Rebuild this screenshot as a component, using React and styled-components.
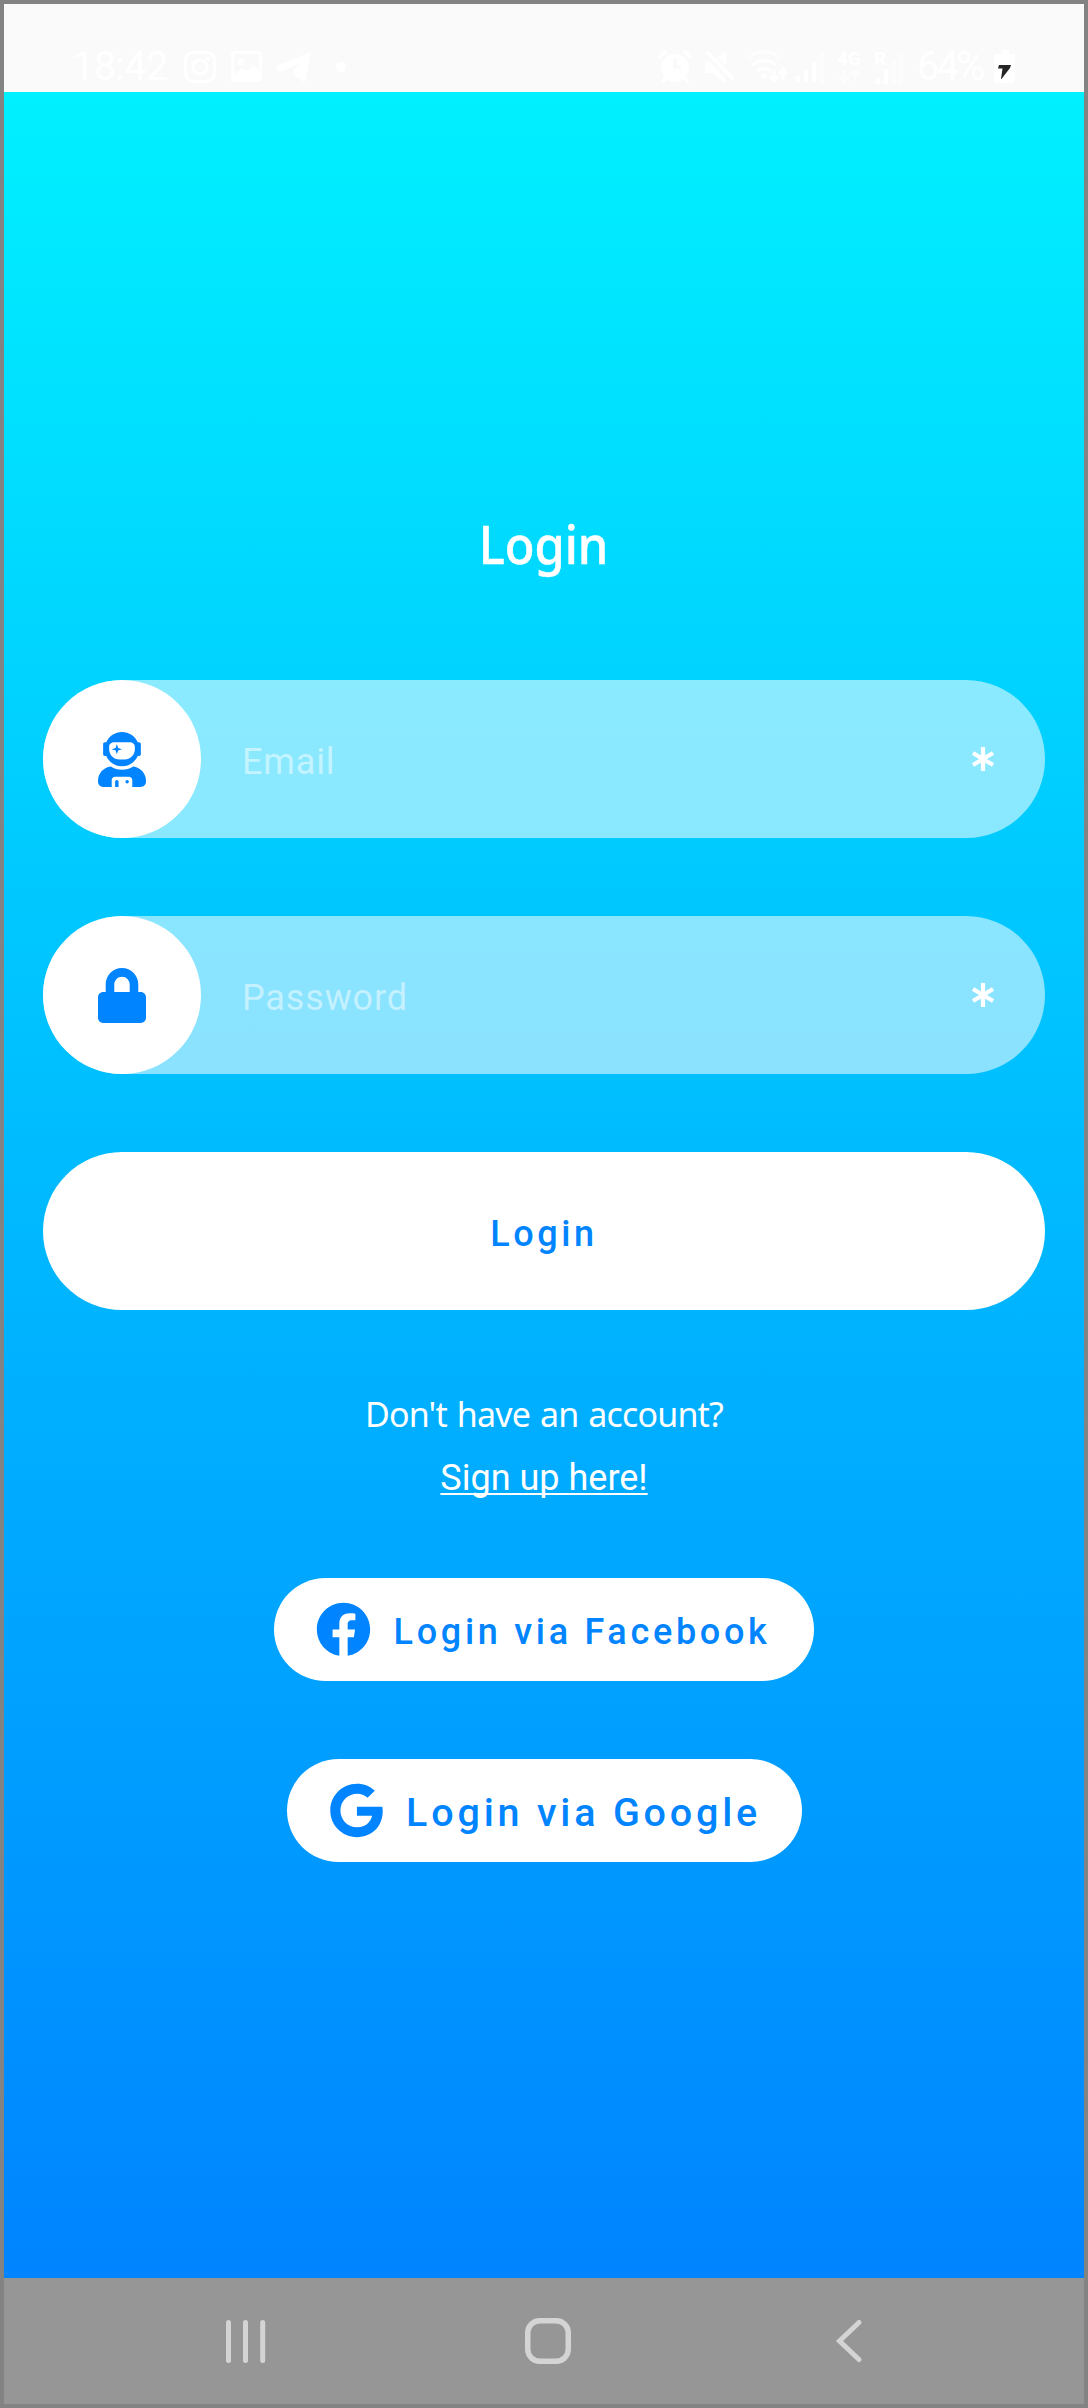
import React from 'react';
import styled, { createGlobalStyle } from 'styled-components';
import { FaFacebook, FaGoogle, FaLock, FaUserAstronaut } from 'react-icons/fa';

const blue = '#0084ff';

const GlobalStyle = createGlobalStyle`
  *, *::before, *::after { box-sizing: border-box; }
  body { margin: 0; font-family: Roboto, "Liberation Sans", sans-serif; }
`;

const Phone = styled.div`
  width: 1088px;
  height: 2408px;
  border: 4px solid #838383;
  display: flex;
  flex-direction: column;
  overflow: hidden;
`;

const StatusBar = styled.header`
  height: 88px;
  padding: 37px 68px 0 68px;
  background: #fafafa;
  color: #fff;
  display: flex;
  align-items: center;
  justify-content: space-between;
`;

const StatusGroup = styled.div`
  display: flex;
  align-items: center;
`;

const StatusText = styled.span`
  font-size: 40px;
  line-height: 40px;
  letter-spacing: ${(p) => p.$spacing || 0}px;
  width: ${(p) => p.$width}px;
  white-space: nowrap;
`;

const StatusIcon = styled.svg`
  display: block;
  flex: none;
  margin-left: ${(p) => p.$gap || 0}px;
  fill: #fff;
`;

const NetworkCell = styled.div`
  width: ${(p) => p.$width}px;
  height: 34px;
  margin-left: ${(p) => p.$gap}px;
  font-size: 19px;
  line-height: 18px;
  font-weight: 700;
`;

const RoamingSignal = styled(StatusIcon)`
  margin-top: -17px;
`;

const Screen = styled.main`
  height: 2186px;
  padding: 412px 39px 0;
  background: linear-gradient(180deg, #00f0ff 0%, ${blue} 100%);
  display: flex;
  flex-direction: column;
  align-items: center;
`;

const Title = styled.h1`
  margin: 0 0 96px;
  height: 80px;
  font-family: "Noto Sans", "Open Sans", sans-serif;
  font-size: 53px;
  line-height: 80px;
  font-weight: 500;
  transform: scaleX(0.92);
  -webkit-text-stroke: 0.5px #fff;
  color: #fff;
`;

const Field = styled.div`
  width: 1002px;
  height: 158px;
  margin-bottom: 78px;
  border-radius: 79px;
  background: rgba(255, 255, 255, 0.54);
  display: flex;
  align-items: center;
`;

const FieldBadge = styled.div`
  width: 158px;
  height: 158px;
  border-radius: 50%;
  background: #fff;
  color: ${blue};
  display: flex;
  align-items: center;
  justify-content: center;
  svg { width: 48px; height: 55px; }
`;

const Placeholder = styled.span`
  flex: 1;
  padding: 6px 0 0 41px;
  font-size: 36px;
  line-height: 44px;
  letter-spacing: 0.85px;
  color: rgba(255, 255, 255, 0.5);
`;

const Required = styled.svg`
  display: block;
  width: 24px;
  height: 24px;
  margin-right: 50px;
  stroke: #fff;
  stroke-width: 4.2;
`;

const Submit = styled.button`
  width: 1002px;
  height: 158px;
  border: 0;
  border-radius: 79px;
  padding: 6px 0 0 0;
  background: #fff;
  color: ${blue};
  font: 500 36px/44px Roboto, sans-serif;
  letter-spacing: 3.6px;
`;

const Prompt = styled.p`
  margin: 77px 0 0;
  height: 54px;
  font-family: "Noto Sans", "Open Sans", sans-serif;
  font-size: 34px;
  line-height: 54px;
  letter-spacing: -0.85px;
  word-spacing: 2px;
  white-space: nowrap;
  color: #fff;
`;

const SignUp = styled.a`
  margin: 14px 0 77px;
  height: 46px;
  font-size: 36px;
  line-height: 46px;
  color: #fff;
  text-decoration: underline;
  text-decoration-thickness: 2px;
  text-underline-offset: 3px;
  text-decoration-skip-ink: none;
`;

const Social = styled.button`
  width: ${(p) => p.$width}px;
  height: 103px;
  margin-bottom: 78px;
  border: 0;
  border-radius: 52px;
  padding: 0 0 0 42px;
  background: #fff;
  color: ${blue};
  display: flex;
  align-items: center;
  gap: 22.6px;
  font: 500 ${(p) => p.$size}px/48px Roboto, sans-serif;
  letter-spacing: ${(p) => p.$spacing}px;
  white-space: nowrap;
  svg { width: auto; height: 55px; flex: none; }
  span { padding-top: 5px; }
`;

const NavBar = styled.nav`
  height: 126px;
  padding: 0 219px;
  background: #969696;
  display: flex;
  align-items: center;
`;

const NavIcon = styled.svg`
  display: block;
  margin-right: ${(p) => p.$after || 0}px;
  fill: none;
  stroke: #d4d4d4;
  stroke-linecap: round;
`;

function Asterisk() {
  return (
    <Required viewBox="-12 -12 24 24">
      <path d="M0-12V12M-10-6L10 6M-10 6L10-6" />
    </Required>
  );
}

export default function App() {
  return (
    <>
      <GlobalStyle />
      <Phone>
        <StatusBar>
          <StatusGroup>
            <StatusText $width={112} $spacing={-0.8}>18:42</StatusText>
            <StatusIcon width="32" height="32" viewBox="0 0 32 32">
              <rect x="1.5" y="1.5" width="29" height="29" rx="8" fill="none" stroke="#fff" strokeWidth="3" />
              <circle cx="16" cy="16" r="7" fill="none" stroke="#fff" strokeWidth="3" />
              <circle cx="24" cy="8" r="2" />
            </StatusIcon>
            <StatusIcon $gap={15} width="32" height="32" viewBox="0 0 32 32">
              <path fillRule="evenodd" d="M2 0h27a2 2 0 0 1 2 2v27a2 2 0 0 1-2 2H2a2 2 0 0 1-2-2V2a2 2 0 0 1 2-2zm1 3v21l8-7 5 3 7-6 5 5V3z" />
              <circle cx="10" cy="11" r="3.5" />
            </StatusIcon>
            <StatusIcon $gap={13} width="36" height="32" viewBox="0 0 36 32">
              <path d="M0 15L35 1l-5 27q-1 4-4 2l-8-6q-3-3 0-5l7-7-14 6q-5 4-10 1z" />
            </StatusIcon>
            <StatusIcon $gap={23} width="12" height="12" viewBox="0 0 12 12">
              <circle cx="6" cy="6" r="5.2" />
            </StatusIcon>
          </StatusGroup>
          <StatusGroup>
            <StatusIcon width="34" height="34" viewBox="0 0 34 34">
              <path d="M1 8l7-7M33 8l-7-7M4 32l4-4M30 32l-4-4" stroke="#fff" strokeWidth="3" />
              <path fillRule="evenodd" d="M17 4a14 14 0 1 1 0 28 14 14 0 0 1 0-28zm-2 5v10h8v-4h-4V9z" />
            </StatusIcon>
            <StatusIcon $gap={13} width="30" height="34" viewBox="0 0 30 34">
              <path d="M0 11h4l17 18v4L8 23H0zM13 8l8-7v14z" />
              <path d="M2 2l26 27" stroke="#fff" strokeWidth="3.5" />
            </StatusIcon>
            <StatusIcon $gap={12} width="42" height="34" viewBox="0 0 42 34">
              <path d="M1 8q16-13 32 0" fill="none" stroke="#fff" strokeWidth="3" opacity=".5" />
              <path d="M5 15q12-9 24 0M10 21q7-5 14 0" fill="none" stroke="#fff" strokeWidth="3" />
              <circle cx="17" cy="26" r="3" />
              <path d="M27 20v9M23 26l4 5 4-5M36 30V20M32 24l4-5 4 5" fill="none" stroke="#fff" strokeWidth="3" />
            </StatusIcon>
            <StatusIcon $gap={7} width="28" height="34" viewBox="0 0 28 34">
              <path d="M0 26h4v7H0zM8 19h4v14H8zM16 11h4v22h-4z" />
              <path d="M24 3h4v30h-4z" opacity=".4" />
            </StatusIcon>
            <NetworkCell $width={26} $gap={13}>
              4G
              <StatusIcon width="24" height="16" viewBox="0 0 24 16">
                <path d="M7 1v11M2 8l5 5 5-5M18 14V3M13 7l5-5 5 5" fill="none" stroke="#fff" strokeWidth="3" opacity=".5" />
              </StatusIcon>
            </NetworkCell>
            <NetworkCell $width={30} $gap={11}>
              R
              <RoamingSignal width="30" height="33" viewBox="0 0 30 33">
                <path d="M2 26h4v7H2zM10 18h4v15h-4z" />
                <path d="M18 10h4v23h-4zM25 2h4v31h-4z" opacity=".4" />
              </RoamingSignal>
            </NetworkCell>
            <StatusIcon $gap={12} width="1" height="1" />
            <StatusText $width={77} $spacing={-3}>64%</StatusText>
            <StatusIcon width="22" height="34" viewBox="0 0 22 34">
              <path d="M7 0h8v4h6v27q0 2-2 2H2q-2 0-2-2V4h7z" />
              <path d="M5 15h12l-1 3-8.500 11H7l1.500-10.500H4z" fill="#252525" />
            </StatusIcon>
          </StatusGroup>
        </StatusBar>
        <Screen>
          <Title>Login</Title>
          <Field>
            <FieldBadge><FaUserAstronaut /></FieldBadge>
            <Placeholder>Email</Placeholder>
            <Asterisk />
          </Field>
          <Field>
            <FieldBadge><FaLock /></FieldBadge>
            <Placeholder>Password</Placeholder>
            <Asterisk />
          </Field>
          <Submit>Login</Submit>
          <Prompt>Don't have an account?</Prompt>
          <SignUp>Sign up here!</SignUp>
          <Social $width={540} $size={36} $spacing={3.7}>
            <FaFacebook />
            <span>Login via Facebook</span>
          </Social>
          <Social $width={515} $size={39.5} $spacing={3.8}>
            <FaGoogle />
            <span>Login via Google</span>
          </Social>
        </Screen>
        <NavBar>
          <NavIcon width="46" height="46" viewBox="0 0 46 46" strokeWidth="5" $after={256}>
            <path d="M5.5 4.5v38M22.5 4.5v38M39.7 4.5v38" />
          </NavIcon>
          <NavIcon width="46" height="46" viewBox="0 0 46 46" strokeWidth="5.5" $after={248}>
            <rect x="2.75" y="2.75" width="40.5" height="40.5" rx="12" />
          </NavIcon>
          <NavIcon width="46" height="46" viewBox="0 0 46 46" strokeWidth="5">
            <path d="M40 4.5L20.5 23 40 41.5" />
          </NavIcon>
        </NavBar>
      </Phone>
    </>
  );
}
